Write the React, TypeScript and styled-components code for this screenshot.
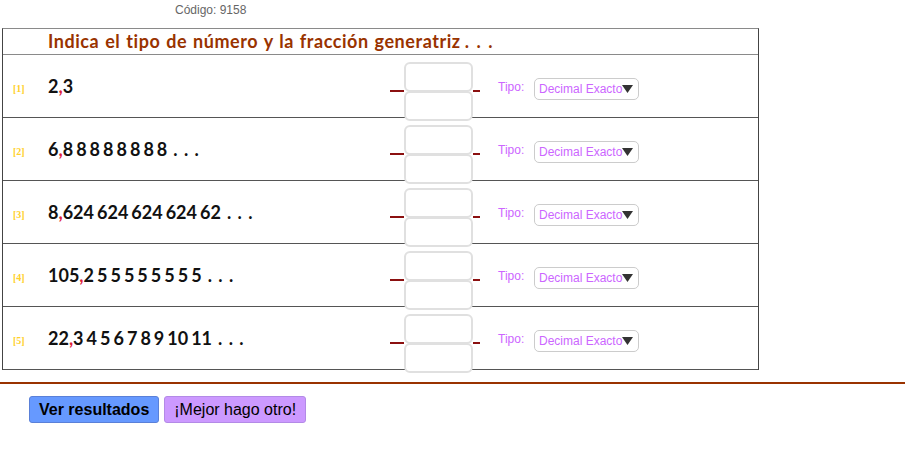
import React from 'react'
import styled, { createGlobalStyle } from 'styled-components'

const GlobalStyle = createGlobalStyle`
  body {
    margin: 0;
    background: #ffffff;
    font-family: "Liberation Sans", Arial, sans-serif;
  }
`

type Exercise = {
  whole: string
  decimals: string[]
  endless: boolean
}

const exercises: Exercise[] = [
  { whole: '2', decimals: ['3'], endless: false },
  { whole: '6', decimals: ['8', '8', '8', '8', '8', '8', '8', '8'], endless: true },
  { whole: '8', decimals: ['624', '624', '624', '624', '62'], endless: true },
  { whole: '105', decimals: ['2', '5', '5', '5', '5', '5', '5', '5', '5'], endless: true },
  { whole: '22', decimals: ['3', '4', '5', '6', '7', '8', '9', '10', '11'], endless: true },
]

const Page = styled.div`
  width: 907px;
`

const CodeLine = styled.div`
  height: 28px;
  padding-left: 175px;
  box-sizing: border-box;
  padding-top: 3px;
  font-size: 12px;
  color: #666666;
`

const Sheet = styled.div`
  margin-left: 2px;
  width: 757px;
  box-sizing: border-box;
  border-top: 1px solid #8a8a8a;
  border-left: 1px solid #444444;
  border-right: 1px solid #444444;
`

const Heading = styled.div`
  height: 23px;
  padding-bottom: 2px;
  padding-left: 45px;
  border-bottom: 1px solid #8a8a8a;
  display: flex;
  align-items: center;
  font-family: Lato, "Noto Sans", sans-serif;
  font-weight: 700;
  font-size: 18px;
  letter-spacing: 0.55px;
  word-spacing: 1px;
  color: #993300;
  white-space: nowrap;
`

const HeadingDots = styled.span`
  margin-left: 4px;
  word-spacing: 2px;
`

const Row = styled.div`
  height: 62px;
  border-bottom: 1px solid #555555;
  display: flex;
  align-items: center;
`

const Label = styled.span`
  width: 35px;
  padding-left: 10px;
  padding-top: 5px;
  font-family: "Liberation Serif", "Times New Roman", serif;
  font-size: 10px;
  font-weight: 700;
  color: #ffd02a;
`

const Number = styled.div`
  width: 342px;
  display: flex;
  align-items: baseline;
  font-family: Lato, "Noto Sans", sans-serif;
  font-weight: 700;
  font-size: 18px;
  color: #111111;
  white-space: nowrap;
`

const Comma = styled.span`
  color: #e0203a;
`

const Group = styled.span<{ $last?: boolean }>`
  margin-right: ${(p) => (p.$last ? 0 : 3)}px;
`

const Dots = styled.span`
  margin-left: 6px;
  letter-spacing: 1px;
`

const Fraction = styled.div`
  position: relative;
  z-index: 1;
  align-self: flex-start;
  margin-top: 7px;
  display: flex;
  align-items: center;
`

const Dash = styled.span<{ $w: number }>`
  width: ${(p) => p.$w}px;
  height: 2px;
  margin-top: -2px;
  background: #8b1010;
`

const Boxes = styled.div`
  display: flex;
  flex-direction: column;
`

const AnswerBox = styled.input`
  width: 69px;
  height: 30px;
  box-sizing: border-box;
  margin: 0;
  padding: 0 4px;
  border: 2px solid #e0e0e0;
  border-radius: 6px;
  background: #ffffff;
  outline: none;
  & + & {
    margin-top: -1px;
  }
`

const TypeLabel = styled.span`
  margin-left: 18px;
  width: 36px;
  margin-top: 2px;
  font-size: 12px;
  color: #cc66ff;
`

const Picker = styled.div`
  width: 105px;
  height: 22px;
  box-sizing: border-box;
  margin-top: 5px;
  padding: 0 4px;
  border: 1px solid #cccccc;
  border-radius: 5px;
  display: flex;
  align-items: center;
  font-size: 12px;
  color: #cc66ff;
  white-space: nowrap;
`

const Rule = styled.div`
  margin-top: 12px;
  width: 905px;
  height: 2px;
  background: #993300;
`

const Actions = styled.div`
  margin-top: 12px;
  padding-left: 29px;
  display: flex;
  gap: 5px;
`

const Button = styled.button<{ $tone: 'blue' | 'violet' }>`
  height: 27px;
  padding: 0 9px;
  border-radius: 3px;
  border: 1px solid ${(p) => (p.$tone === 'blue' ? '#5a80d8' : '#b38ae6')};
  background: ${(p) => (p.$tone === 'blue' ? '#6699ff' : '#cc99ff')};
  font-family: "Liberation Sans", Arial, sans-serif;
  font-size: 16px;
  font-weight: ${(p) => (p.$tone === 'blue' ? 700 : 400)};
  color: #000000;
  cursor: pointer;
`

const Caret = () => (
  <svg width="11" height="8" viewBox="0 0 11 8">
    <polygon points="0,0 11,0 5.5,8" fill="#333333" />
  </svg>
)

export default function App() {
  return (
    <Page>
      <GlobalStyle />
      <CodeLine>Código: 9158</CodeLine>
      <Sheet>
        <Heading>
          Indica el tipo de número y la fracción generatriz
          <HeadingDots>. . .</HeadingDots>
        </Heading>
        {exercises.map((ex, i) => (
          <Row key={i}>
            <Label>[{i + 1}]</Label>
            <Number>
              <span>{ex.whole}</span>
              <Comma>,</Comma>
              {ex.decimals.map((d, j) => (
                <Group key={j} $last={j === ex.decimals.length - 1}>
                  {d}
                </Group>
              ))}
              {ex.endless && <Dots>. . .</Dots>}
            </Number>
            <Fraction>
              <Dash $w={14} />
              <Boxes>
                <AnswerBox aria-label="numerador" />
                <AnswerBox aria-label="denominador" />
              </Boxes>
              <Dash $w={7} />
            </Fraction>
            <TypeLabel>Tipo:</TypeLabel>
            <Picker>
              <span>Decimal Exacto</span>
              <Caret />
            </Picker>
          </Row>
        ))}
      </Sheet>
      <Rule />
      <Actions>
        <Button $tone="blue">Ver resultados</Button>
        <Button $tone="violet">¡Mejor hago otro!</Button>
      </Actions>
    </Page>
  )
}
